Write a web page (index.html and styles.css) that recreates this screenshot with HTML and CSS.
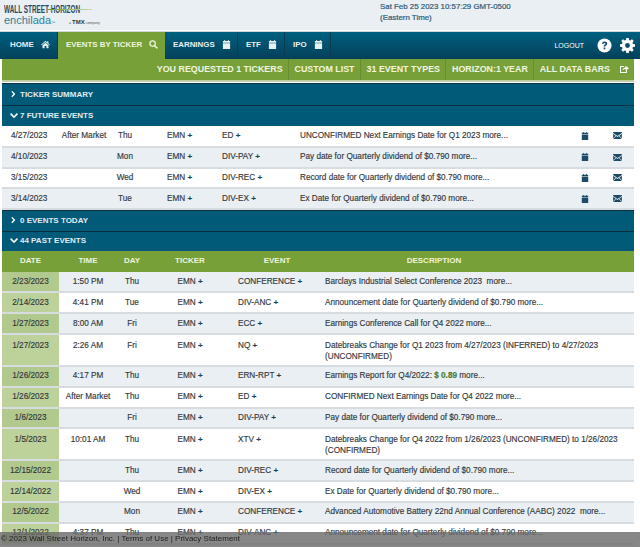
FILE: index.html
```html
<!DOCTYPE html>
<html lang="en">
<head>
<meta charset="utf-8">
<title>Events by Ticker</title>
<link rel="stylesheet" href="styles.css">
</head>
<body>
<svg class="sprites" width="0" height="0" aria-hidden="true">
  <symbol id="cal" viewBox="0 0 10 10"><path d="M1 1h1.500V0h1v1h3V0h1v1H9v2H1zM1 3.700h8V10H1z"/></symbol>
  <symbol id="mail" viewBox="0 0 10 8"><path d="M0 0h10v1L5 4.500 0 1zM0 2l3 2.200L0 7zM10 2v5L7 4.200zM3.600 4.700 5 5.700l1.400-1L10 8H0z"/></symbol>
  <symbol id="right" viewBox="0 0 8 10"><path d="M2 0l5 5-5 5-1.500-1.500L4 5 .5 1.500z"/></symbol>
  <symbol id="down" viewBox="0 0 10 8"><path d="M0 2.500 1.500 1 5 4.500 8.500 1 10 2.500 5 7.500z"/></symbol>
</svg>
<header class="top">
  <div class="logo">
    <div class="logo-main">WALL STREET HORIZON</div>
    <span class="swoosh"></span>
    <div class="logo-sub"><span class="ench">enchilada</span><span class="tm">™</span><span class="tmx">a <b>TMX</b> company</span></div>
  </div>
  <div class="clock">Sat Feb 25 2023 10:57:29 GMT-0500<br>(Eastern Time)</div>
</header>
<nav class="nav">
  <a class="tab w-home">HOME <svg class="ni" viewBox="0 0 12 10"><path d="M6 0l2.300 2V.8h1.500v2.600L12 5.300l-.7.700L6 1.500.7 6 0 5.300zM2 6l4-3.300L10 6v4H7.200V7H4.800v3H2z"/></svg></a>
  <a class="tab active w-ev">EVENTS BY TICKER <svg class="ni" viewBox="0 0 10 10"><circle cx="4" cy="4" r="3" fill="none" stroke="currentColor" stroke-width="1.400"/><path d="M6 6l3.300 3.300" stroke="currentColor" stroke-width="1.600"/></svg></a>
  <a class="tab w-earn">EARNINGS <svg class="ni"><use href="#cal"/></svg></a>
  <a class="tab w-etf">ETF <svg class="ni"><use href="#cal"/></svg></a>
  <a class="tab w-ipo">IPO <svg class="ni"><use href="#cal"/></svg></a>
  <div class="nav-right">
    <span class="logout">LOGOUT</span>
    <svg class="big" viewBox="0 0 16 16"><circle cx="8" cy="8" r="7.500" fill="#fff"/><path d="M5.300 6.200C5.400 4.500 6.600 3.600 8.200 3.600c1.600 0 2.700 1 2.700 2.300 0 1.800-2 1.900-2 3.200H7.100c0-2 1.900-2.200 1.900-3.100 0-.5-.4-.8-.9-.8-.6 0-1 .4-1.100 1zM7.100 10h1.800v1.900H7.100z" fill="#0e4a66"/></svg>
    <svg class="big gear" viewBox="0 0 16 16"><path fill="#fff" fill-rule="evenodd" d="M6.700 0h2.600l.4 2.200 1.200.5L12.800 1.400l1.800 1.800-1.300 1.900.5 1.200 2.200.4v2.600l-2.200.4-.5 1.200 1.300 1.900-1.800 1.800-1.900-1.300-1.200.5-.4 2.200H6.700l-.4-2.200-1.200-.5-1.900 1.300-1.800-1.800 1.300-1.900-.5-1.200L0 9.300V6.700l2.200-.4.5-1.200L1.400 3.200l1.800-1.800 1.900 1.300 1.200-.5zM8 5.400a2.600 2.600 0 1 0 0 5.200 2.600 2.600 0 0 0 0-5.200z"/></svg>
  </div>
</nav>
<main class="page">
  <div class="sub">
    <span class="sub-item">YOU REQUESTED 1 TICKERS</span>
    <span class="sub-item">CUSTOM LIST</span>
    <span class="sub-item">31 EVENT TYPES</span>
    <span class="sub-item">HORIZON:1 YEAR</span>
    <span class="sub-item last">ALL DATA BARS</span>
    <svg class="share" viewBox="0 0 10 10"><path d="M1 2h4v1H2v5h5V6h1v3H1z" fill="#fff"/><path d="M3.500 6.500C3.700 4.500 5 3.500 6.500 3.500V1.800L10 4.300 6.500 6.800V5C5.200 5 4.300 5.500 3.500 6.500z" fill="#fff"/></svg>
  </div>

  <div class="bar first"><svg class="chev r"><use href="#right"/></svg>TICKER SUMMARY</div>
  <div class="bar"><svg class="chev"><use href="#down"/></svg>7 FUTURE EVENTS</div>
  <table class="tbl future">
    <colgroup><col class="f1"><col class="f2"><col class="f3"><col class="f4"><col class="f5"><col class="f6"><col class="f7"><col class="f8"></colgroup>
    <tr><td>4/27/2023</td><td class="c">After Market</td><td class="c">Thu</td><td>EMN <i>+</i></td><td>ED <i>+</i></td><td>UNCONFIRMED Next Earnings Date for Q1 2023 more...</td><td class="c"><svg class="ci"><use href="#cal"/></svg></td><td class="c"><svg class="mi"><use href="#mail"/></svg></td></tr>
    <tr><td>4/10/2023</td><td></td><td class="c">Mon</td><td>EMN <i>+</i></td><td>DIV-PAY <i>+</i></td><td>Pay date for Quarterly dividend of $0.790 more...</td><td class="c"><svg class="ci"><use href="#cal"/></svg></td><td class="c"><svg class="mi"><use href="#mail"/></svg></td></tr>
    <tr><td>3/15/2023</td><td></td><td class="c">Wed</td><td>EMN <i>+</i></td><td>DIV-REC <i>+</i></td><td>Record date for Quarterly dividend of $0.790 more...</td><td class="c"><svg class="ci"><use href="#cal"/></svg></td><td class="c"><svg class="mi"><use href="#mail"/></svg></td></tr>
    <tr><td>3/14/2023</td><td></td><td class="c">Tue</td><td>EMN <i>+</i></td><td>DIV-EX <i>+</i></td><td>Ex Date for Quarterly dividend of $0.790 more...</td><td class="c"><svg class="ci"><use href="#cal"/></svg></td><td class="c"><svg class="mi"><use href="#mail"/></svg></td></tr>
  </table>
  <div class="bar thin"><svg class="chev r"><use href="#right"/></svg>0 EVENTS TODAY</div>
  <div class="bar thin"><svg class="chev"><use href="#down"/></svg>44 PAST EVENTS</div>
  <table class="tbl past">
    <colgroup><col class="p1"><col class="p2"><col class="p3"><col class="p4"><col class="p5"><col class="p6"></colgroup>
    <tr class="head"><th>DATE</th><th>TIME</th><th>DAY</th><th>TICKER</th><th>EVENT</th><th class="desc-h">DESCRIPTION</th></tr>
    <tr><td class="d">2/23/2023</td><td class="c">1:50 PM</td><td class="c">Thu</td><td class="c">EMN <i>+</i></td><td>CONFERENCE <i>+</i></td><td>Barclays Industrial Select Conference 2023 &nbsp;more...</td></tr>
    <tr><td class="d">2/14/2023</td><td class="c">4:41 PM</td><td class="c">Tue</td><td class="c">EMN <i>+</i></td><td>DIV-ANC <i>+</i></td><td>Announcement date for Quarterly dividend of $0.790 more...</td></tr>
    <tr><td class="d">1/27/2023</td><td class="c">8:00 AM</td><td class="c">Fri</td><td class="c">EMN <i>+</i></td><td>ECC <i>+</i></td><td>Earnings Conference Call for Q4 2022 more...</td></tr>
    <tr class="tall"><td class="d">1/27/2023</td><td class="c">2:26 AM</td><td class="c">Fri</td><td class="c">EMN <i>+</i></td><td>NQ <i>+</i></td><td>Datebreaks Change for Q1 2023 from 4/27/2023 (INFERRED) to 4/27/2023 (UNCONFIRMED)</td></tr>
    <tr><td class="d">1/26/2023</td><td class="c">4:17 PM</td><td class="c">Thu</td><td class="c">EMN <i>+</i></td><td>ERN-RPT <i>+</i></td><td>Earnings Report for Q4/2022: <b class="gain">$ 0.89</b> more...</td></tr>
    <tr><td class="d">1/26/2023</td><td class="c">After Market</td><td class="c">Thu</td><td class="c">EMN <i>+</i></td><td>ED <i>+</i></td><td>CONFIRMED Next Earnings Date for Q4 2022 more...</td></tr>
    <tr><td class="d">1/6/2023</td><td class="c"></td><td class="c">Fri</td><td class="c">EMN <i>+</i></td><td>DIV-PAY <i>+</i></td><td>Pay date for Quarterly dividend of $0.790 more...</td></tr>
    <tr class="tall"><td class="d">1/5/2023</td><td class="c">10:01 AM</td><td class="c">Thu</td><td class="c">EMN <i>+</i></td><td>XTV <i>+</i></td><td>Datebreaks Change for Q4 2022 from 1/26/2023 (UNCONFIRMED) to 1/26/2023 (CONFIRMED)</td></tr>
    <tr><td class="d">12/15/2022</td><td class="c"></td><td class="c">Thu</td><td class="c">EMN <i>+</i></td><td>DIV-REC <i>+</i></td><td>Record date for Quarterly dividend of $0.790 more...</td></tr>
    <tr><td class="d">12/14/2022</td><td class="c"></td><td class="c">Wed</td><td class="c">EMN <i>+</i></td><td>DIV-EX <i>+</i></td><td>Ex Date for Quarterly dividend of $0.790 more...</td></tr>
    <tr><td class="d">12/5/2022</td><td class="c"></td><td class="c">Mon</td><td class="c">EMN <i>+</i></td><td>CONFERENCE <i>+</i></td><td>Advanced Automotive Battery 22nd Annual Conference (AABC) 2022 &nbsp;more...</td></tr>
    <tr><td class="d">12/1/2022</td><td class="c">4:37 PM</td><td class="c">Thu</td><td class="c">EMN <i>+</i></td><td>DIV-ANC <i>+</i></td><td>Announcement date for Quarterly dividend of $0.790 more...</td></tr>
  </table>
</main>
<footer class="foot">© 2023 Wall Street Horizon, Inc. | Terms of Use | Privacy Statement</footer>
</body>
</html>
```

FILE: styles.css
```css
* { box-sizing: border-box; }
html, body { margin: 0; height: 547px; overflow: hidden; background: #fff; }
body { font-family: "Liberation Sans", Arial, sans-serif; font-size: 8.2px; color: #33383d; }
.sprites { position: absolute; }
svg { fill: currentColor; }

.top { height: 30px; background: #e9eff2; display: flex; }
.logo { width: 380px; padding: 4px 0 0 4px; position: relative; }
.logo-main { font-weight: 700; font-size: 11px; line-height: 10px; color: #2d4a5e; transform-origin: left; transform: scaleX(.58); white-space: nowrap; }
.swoosh { position: absolute; left: 48px; top: 9px; width: 44px; height: 1px; background: linear-gradient(90deg, #6f9a3a, #cfdcae); }
.logo-sub { display: flex; align-items: baseline; line-height: 13px; color: #2f7f97; }
.ench { font-size: 11px; }
.tm { font-size: 4px; }
.tmx { font-size: 3.500px; color: #555; margin-left: 14px; }
.tmx b { font-size: 6px; color: #333; }
.clock { padding-top: 1px; font-size: 7.900px; line-height: 11px; color: #2d5a78; -webkit-text-stroke: .2px #2d5a78; }

.nav { height: 28px; margin-top: 1px; padding-left: 2px; display: flex; background: linear-gradient(#00607f, #04405a); border-top: 1px solid #c9d6da; color: #fff; font-size: 7.900px; font-weight: 700; }
.tab { display: flex; align-items: center; gap: 7px; padding: 0 0 2px 8px; border-right: 1px solid #0a3d54; color: #e8f0f2; }
.w-home { width: 56px; }
.w-ev { width: 107px; background: #78a038; color: #eef4dc; border: 0; }
.w-earn { width: 73px; }
.w-etf { width: 47px; }
.w-ipo { width: 46px; }
.ni { width: 9px; height: 9px; }
.nav-right { margin-left: auto; display: flex; align-items: center; padding: 0 5px 1px 0; }
.logout { font-size: 7px; font-weight: 400; margin-right: 13px; }
.big { width: 15px; height: 15px; }
.gear { margin-left: 8px; }

.page { padding: 0 6px 0 2px; }
.sub { height: 23px; background: #78a038; border-bottom: 2px solid #c2cfa6; display: flex; justify-content: flex-end; align-items: stretch; color: #f0f5e0; font-size: 8.900px; font-weight: 700; }
.sub-item { display: flex; align-items: center; padding: 0 5px 2px 6px; border-right: 1px solid #688c30; }
.sub-item.last { border: 0; padding-right: 9px; }
.share { width: 10px; height: 10px; margin: 5px 5px 0 0; }

.bar { height: 21px; padding: 0 0 1px 8px; border-top: 1px solid #0c2f3f; background: #005a78; color: #e3edf0; font-weight: 700; font-size: 8px; display: flex; align-items: center; }
.bar.first { margin-top: 1px; height: 22px; }
.bar.thin { height: 20.500px; }
.chev { width: 8px; height: 7px; margin-right: 2px; color: #fff; }
.chev.r { width: 5px; height: 8px; margin: 0 4px 0 1px; }

.tbl { width: 100%; border-collapse: collapse; table-layout: fixed; }
.tbl td { height: 20.800px; padding: 0 0 1px; border-bottom: 2px solid #d6dcdf; vertical-align: middle; white-space: nowrap; -webkit-text-stroke: .15px #33383d; }
.tbl tr:nth-child(even) td { background: #e9eff2; }
.c { text-align: center; }
.tbl i { font-style: normal; font-weight: 700; font-size: 8px; color: #0e4a66; }
.future td:first-child { padding-left: 9px; }
.future td:nth-child(4) { padding-left: 29px; }
.f1 { width: 54px; } .f2 { width: 56px; } .f3 { width: 26px; } .f4 { width: 84px; } .f5 { width: 78px; } .f6 { width: 269px; } .f7 { width: 32px; } .f8 { width: 33px; }
.ci { width: 8px; height: 8px; color: #1d4a66; vertical-align: middle; }
.mi { width: 9px; height: 7px; color: #1d4a66; vertical-align: middle; }

.p1 { width: 57px; } .p2 { width: 58px; } .p3 { width: 30px; } .p4 { width: 86px; } .p5 { width: 88px; } .p6 { width: 313px; }
.past th { height: 20.500px; background: #78a038; color: #eef4dc; font-size: 8px; font-weight: 700; padding: 0 0 2px; }
.past .desc-h { padding-right: 87px; }
.past td:nth-child(5) { padding-left: 5px; }
.past td:nth-child(6) { padding-left: 4px; }
.past .d, .past tr:nth-child(even) .d { background: #bdd29a; text-align: center; }
.past tr:nth-child(even) .d { background: #b2c98e; }
.tbl .tall td { height: 32px; vertical-align: top; padding-top: 5px; white-space: normal; line-height: 11px; }
.gain { color: #4a8a2a; }

.foot { position: fixed; left: 0; right: 0; bottom: 0; height: 15px; padding-left: 1px; line-height: 14px; background: rgba(105,105,105,.8); color: #222; font-size: 8px; }
```
